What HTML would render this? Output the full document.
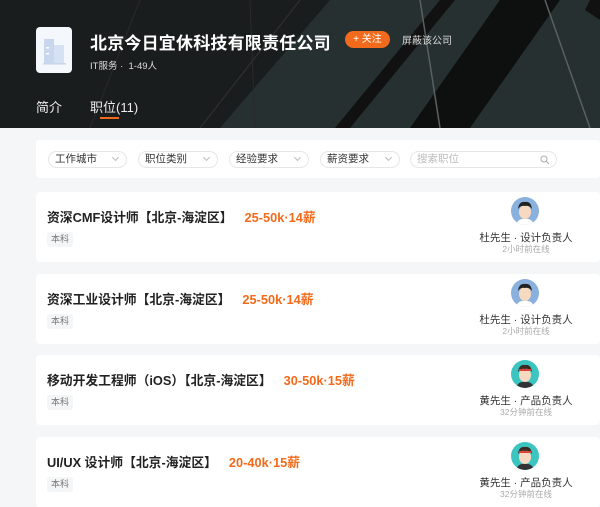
<!DOCTYPE html>
<html><head><meta charset="utf-8"><style>
*{margin:0;padding:0;box-sizing:border-box}
body{width:600px;height:506px;overflow:hidden;background:#f5f6f7;font-family:"Liberation Sans","Noto Sans CJK SC",sans-serif;position:relative}
.hd{position:absolute;left:0;top:0;width:600px;height:128px;background:#1a1d1d;overflow:hidden}
.abs{position:absolute}
.logo{left:36px;top:27px;width:36px;height:46px;background:#f4f7fc;border-radius:4px}
.title{left:90px;top:29px;font-size:17px;font-weight:bold;color:#fff;white-space:nowrap;letter-spacing:0.2px}
.follow{left:345px;top:31px;width:45px;height:17px;background:#f26a1b;border-radius:9px;color:#fff;font-size:10px;line-height:17px;text-align:center}
.block{left:402px;top:32px;font-size:10px;color:#ddd}
.sub{left:90px;top:58px;font-size:9.5px;color:#ddd}
.tab{top:97px;font-size:13px;color:#eee}
.ul{left:100px;top:117px;width:19px;height:2px;background:#f26a1b}
.filter{left:36px;top:140px;width:564px;height:38px;background:#fff;border-radius:4px}
.dd{top:151px;height:17px;border:1px solid #e6e6e6;border-radius:9px;font-size:10.5px;color:#333;line-height:15px;padding-left:6px;background:#fff}
.dd i{position:absolute;right:8px;top:3px;width:5px;height:5px;border-right:1px solid #bbb;border-bottom:1px solid #bbb;transform:rotate(45deg)}
.card{left:36px;width:564px;height:70px;background:#fff;border-radius:4px}
.jt{position:absolute;left:11px;top:15px;font-size:12.8px;font-weight:bold;color:#222;white-space:nowrap}
.jt span{color:#f26a1b;margin-left:12px}
.tag{position:absolute;left:11px;top:40px;width:26px;height:15px;background:#f3f5f7;border-radius:3px;font-size:9px;color:#777;text-align:center;line-height:15px}
.av{position:absolute;left:475px;top:5px;width:28px;height:28px;border-radius:50%;overflow:hidden}
.nm{position:absolute;left:430px;width:120px;text-align:center;top:38px;font-size:10.5px;color:#333}
.on{position:absolute;left:430px;width:120px;text-align:center;top:51px;font-size:8.5px;color:#aaa}
</style></head><body>
<div class="hd">
<svg width="600" height="128" style="position:absolute;left:0;top:0">
<polygon points="330,0 600,0 600,128 220,128" fill="#263030"/>
<polygon points="500,0 560,0 470,128 410,128" fill="#0e1010"/>
<polygon points="440,0 455,0 350,128 335,128" fill="#111"/>
<polygon points="590,0 600,0 600,20 585,10" fill="#111"/>
<line x1="420" y1="0" x2="440" y2="128" stroke="#5a6060" stroke-width="1.5"/>
<line x1="545" y1="0" x2="590" y2="128" stroke="#5a6060" stroke-width="1.5"/>
<line x1="300" y1="0" x2="200" y2="128" stroke="#333" stroke-width="1"/>
<line x1="140" y1="0" x2="90" y2="128" stroke="#2a2a2a" stroke-width="1"/>
<line x1="250" y1="0" x2="255" y2="128" stroke="#2a2a2a" stroke-width="1"/>
</svg>
</div>
<div class="abs logo"><svg width="36" height="46"><rect x="8" y="12" width="10" height="24" fill="#c8d6ee"/><rect x="18" y="18" width="10" height="18" fill="#d6e1f3"/><rect x="7" y="36" width="23" height="1.5" fill="#c8d6ee"/><rect x="10" y="20" width="3" height="1.5" fill="#fff"/><rect x="10" y="26" width="3" height="1.5" fill="#fff"/></svg></div>
<div class="abs title">北京今日宜休科技有限责任公司</div>
<div class="abs follow">+ 关注</div>
<div class="abs block">屏蔽该公司</div>
<div class="abs sub">IT服务 · &nbsp;1-49人</div>
<div class="abs tab" style="left:36px">简介</div>
<div class="abs tab" style="left:90px">职位(11)</div>
<div class="abs ul"></div>
<div class="abs filter"></div>
<div class="abs dd" style="left:48px;width:79px">工作城市<i></i></div>
<div class="abs dd" style="left:138px;width:80px">职位类别<i></i></div>
<div class="abs dd" style="left:229px;width:80px">经验要求<i></i></div>
<div class="abs dd" style="left:320px;width:80px">薪资要求<i></i></div>
<div class="abs dd" style="left:410px;width:147px;color:#bbb">搜索职位<svg style="position:absolute;right:6px;top:3px" width="10" height="10"><circle cx="4" cy="4" r="3" fill="none" stroke="#aaa"/><line x1="6.2" y1="6.2" x2="9" y2="9" stroke="#aaa"/></svg></div>

<div class="abs card" style="top:192px"><div class="jt">资深CMF设计师【北京-海淀区】<span>25-50k·14薪</span></div><div class="tag">本科</div>
<div class="av"><svg width="28" height="28"><rect width="28" height="28" fill="#8ab0de"/><ellipse cx="14" cy="15" rx="6" ry="7" fill="#f6d9bf"/><path d="M7 12 Q8 4 14 5 Q20 4 21 12 Q18 8 14 9 Q10 8 7 12Z" fill="#222"/><path d="M5 28 Q7 21 14 22 Q21 21 23 28Z" fill="#fff"/></svg></div>
<div class="nm">杜先生 · 设计负责人</div><div class="on">2小时前在线</div></div>

<div class="abs card" style="top:274px"><div class="jt">资深工业设计师【北京-海淀区】<span>25-50k·14薪</span></div><div class="tag">本科</div>
<div class="av"><svg width="28" height="28"><rect width="28" height="28" fill="#8ab0de"/><ellipse cx="14" cy="15" rx="6" ry="7" fill="#f6d9bf"/><path d="M7 12 Q8 4 14 5 Q20 4 21 12 Q18 8 14 9 Q10 8 7 12Z" fill="#222"/><path d="M5 28 Q7 21 14 22 Q21 21 23 28Z" fill="#fff"/></svg></div>
<div class="nm">杜先生 · 设计负责人</div><div class="on">2小时前在线</div></div>

<div class="abs card" style="top:355px"><div class="jt">移动开发工程师（iOS）【北京-海淀区】<span>30-50k·15薪</span></div><div class="tag">本科</div>
<div class="av"><svg width="28" height="28"><rect width="28" height="28" fill="#3cc5c0"/><ellipse cx="14" cy="15" rx="6" ry="7" fill="#f6d9bf"/><path d="M7 12 Q8 4 14 5 Q20 4 21 12 Q18 8 14 9 Q10 8 7 12Z" fill="#3a2a22"/><rect x="8" y="9" width="12" height="2" fill="#d9443a"/><path d="M5 28 Q7 21 14 22 Q21 21 23 28Z" fill="#333"/></svg></div>
<div class="nm">黄先生 · 产品负责人</div><div class="on">32分钟前在线</div></div>

<div class="abs card" style="top:437px"><div class="jt">UI/UX 设计师【北京-海淀区】<span>20-40k·15薪</span></div><div class="tag">本科</div>
<div class="av"><svg width="28" height="28"><rect width="28" height="28" fill="#3cc5c0"/><ellipse cx="14" cy="15" rx="6" ry="7" fill="#f6d9bf"/><path d="M7 12 Q8 4 14 5 Q20 4 21 12 Q18 8 14 9 Q10 8 7 12Z" fill="#3a2a22"/><rect x="8" y="9" width="12" height="2" fill="#d9443a"/><path d="M5 28 Q7 21 14 22 Q21 21 23 28Z" fill="#333"/></svg></div>
<div class="nm">黄先生 · 产品负责人</div><div class="on">32分钟前在线</div></div>
</body></html>
